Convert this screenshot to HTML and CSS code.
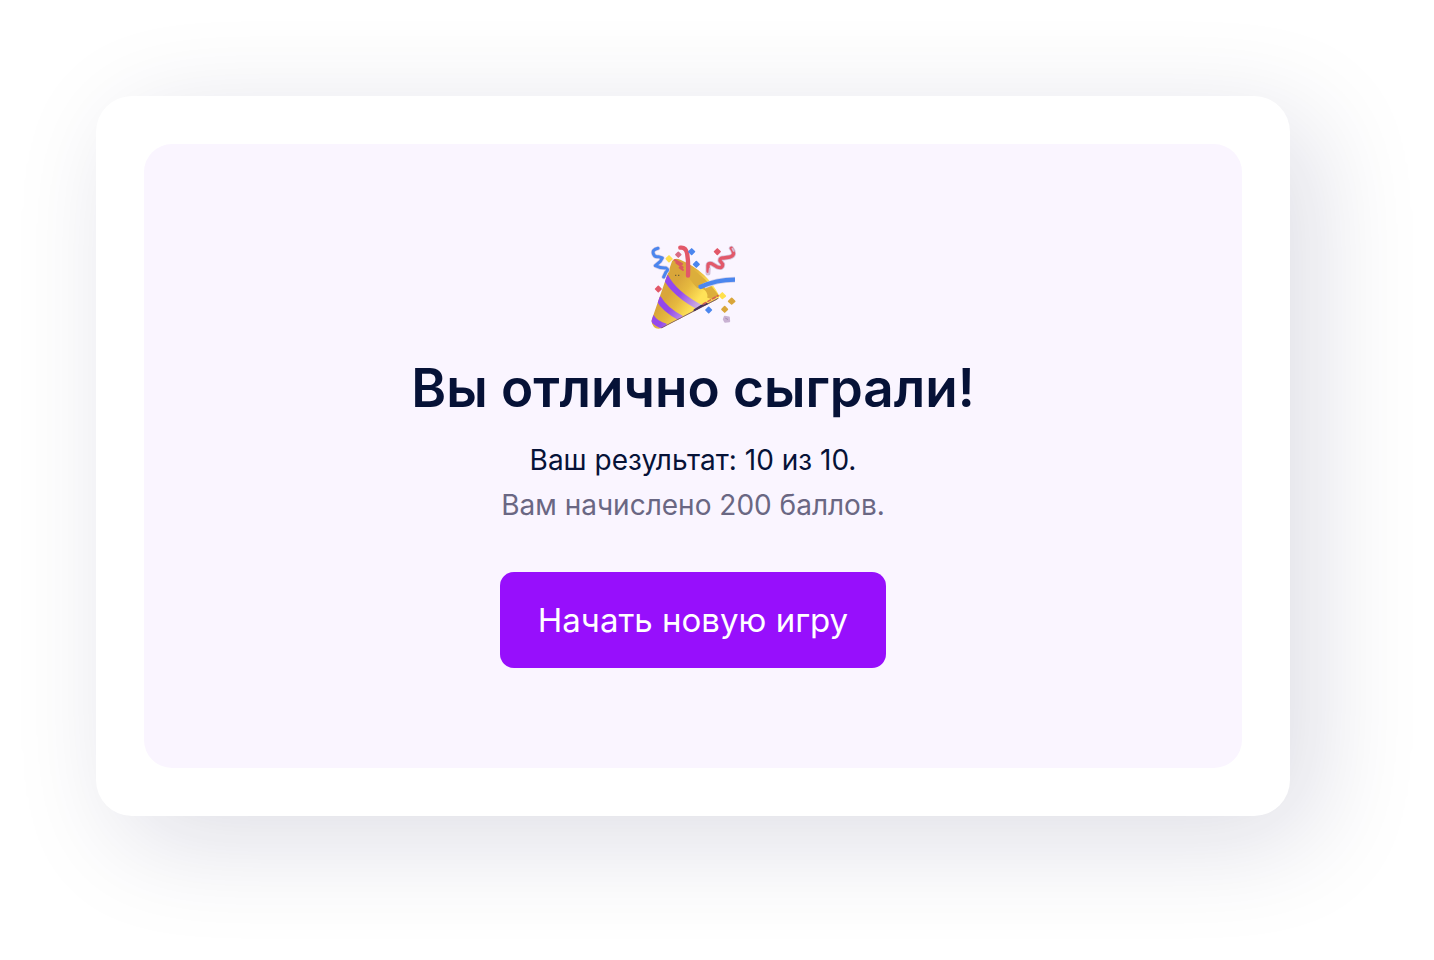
FILE: index.html
```html
<!DOCTYPE html>
<html lang="ru">
  <head>
    <meta charset="UTF-8" />
    <meta name="viewport" content="width=device-width, initial-scale=1.0" />
    <title>Результат игры</title>
    <link rel="stylesheet" href="styles.css">
  </head>
  <body>
    <main class="card">
      <section class="result">
        <svg class="result-icon" viewBox="30 29 258 258" fill="none" stroke-linecap="round" stroke-linejoin="round" aria-hidden="true">
          <defs>
            <linearGradient id="gold" gradientUnits="userSpaceOnUse" x1="75" y1="155" x2="160" y2="215">
              <stop offset="0.2" stop-color="#d9a63a" />
              <stop offset="0.55" stop-color="#e6b93f" />
              <stop offset="1" stop-color="#ffe258" />
            </linearGradient>
            <linearGradient id="stripe" gradientUnits="userSpaceOnUse" x1="60" y1="140" x2="175" y2="215">
              <stop offset="0.5" stop-color="#9448ec" />
              <stop offset="1" stop-color="#cfb3df" />
            </linearGradient>
            <clipPath id="cone">
              <path d="M96 78 Q102 65 121 73 Q202 108 237 180 Q240 188 230 193 L66 278 Q40 287 34 257 Z" />
            </clipPath>
          </defs>

          <!-- cone -->
          <g clip-path="url(#cone)">
            <path fill="url(#gold)" d="M30 60H245V285H30z" />
            <path fill="#dcae3b" d="M148 95 Q198 127 238 182 L218 192 L202 187 Q205 168 187 160 L171 158 Q147 132 142 116z" />
            <g stroke="url(#stripe)" stroke-width="18" stroke-linecap="butt">
              <path d="M76 123 Q102 176 187 220" />
              <path d="M54 187 Q75 224 124 249" />
              <path d="M33 244 Q47 267 78 274" />
            </g>
            <path stroke="#795568" stroke-width="6" d="M66 279 L152 234 L235 191" />
            <path stroke="#45315f" stroke-width="7" d="M164 225 L184 212 L200 206" />
            <path stroke="#d56253" stroke-width="5" stroke-dasharray="9 7" d="M190 206 L234 181" />
            <path stroke="#dc5960" stroke-width="6" d="M104 74 L126 86 M109 82 L128 96 M119 97 L129 104" />
            <path fill="#756334" d="M105 118h4v4h-4zm9 0h4v4h-4z" />
          </g>

          <!-- streamers -->
          <path stroke="#ddd0e5" stroke-width="13" d="M54 39 Q36 43 40 55 Q43 66 55 64 L67 68 L61 78 L46 91 Q63 99 78 98 Q88 103 78 110 L71 125" />
          <path stroke="#4b86ee" stroke-width="9" d="M54 39 Q36 43 40 55 Q43 66 55 64 L67 68 L61 78 L46 91 Q63 99 78 98 Q88 103 78 110 L71 125" />
          <path stroke="#e25869" stroke-width="13" d="M121 37 Q137 35 141 53 Q146 77 144 121" />
          <path stroke="#d5c4db" stroke-width="15" d="M204 113 L204 92 Q203 82 215 85 L230 94 Q248 102 248 87 L240 76 Q239 67 251 68 L270 65 Q289 59 274 39" />
          <path stroke="#e25869" stroke-width="10" d="M204 108 L204 92 Q203 82 215 85 L230 94 Q248 102 248 87 L240 76 Q239 67 251 68 L270 65 Q289 59 274 39" />
          <path stroke="#d5bdd6" stroke-width="5" d="M207 116 L209 100 M277 40 L281 47" />
          <path stroke="#d4d1ea" stroke-width="17" stroke-linecap="butt" d="M192 152 Q229 133 285 133" />
          <path stroke="#4b86ee" stroke-width="13" stroke-linecap="butt" d="M178 156 Q229 133 285 133" />
          <path stroke="#4b86ee" stroke-width="10" d="M180 155 L188 154" />

          <!-- confetti -->
          <g stroke-width="5">
            <path fill="#4b86ee" stroke="#4b86ee" d="M155 41l8 8-8 8-8-8zM169 79l8 8-8 8-8-8zM206 216l8 8-8 8-8-8z" />
            <path fill="#e25869" stroke="#e25869" d="M232 41l8 8-8 8-8-8zM55 153l8 8-8 8-8-8z" />
            <path fill="#d96b84" stroke="#d96b84" d="M115 51l7 7-7 7-7-7z" />
            <path fill="#ffe04d" stroke="#ffe04d" d="M87 62l9 9-9 8-8-9zM247 173l9 9-9 7-8-8z" />
            <path fill="#d9a63a" stroke="#d9a63a" d="M275 189l9 9-9 8-9-8zM254 214l8 8-8 8-8-8z" />
            <path fill="#c9b2d3" stroke="#c9b2d3" d="M254 244l13 2 1 12-13 2-4-8z" />
          </g>
          <path stroke="#a58bb1" stroke-width="3" d="M257 249l6 3" />
        </svg>

        <h1 class="result-title">Вы отлично сыграли!</h1>
        <p class="result-text">Ваш результат: 10 из 10.</p>
        <p class="result-text muted">Вам начислено 200 баллов.</p>
        <button class="btn" type="button">Начать новую игру</button>
      </section>
    </main>
  </body>
</html>
```
FILE: styles.css
```css
*,
*::after,
*::before {
  margin: 0;
  padding: 0;
  box-sizing: border-box;
}

:root {
  --dark: #061237;
  --muted: #6a6783;
  --accent: #970ffc;
  --panel: #faf5ff;
}

body {
  min-height: 100vh;
  padding: 96px 144px 144px 96px;
  display: flex;
  background-color: white;
  color: var(--dark);
  font-family: Inter, "Noto Sans", sans-serif;
}

.card {
  flex: 1;
  display: flex;
  padding: 48px;
  border-radius: 36px;
  background-color: white;
  box-shadow: 24px 24px 108px rgba(16, 16, 72, 0.14);
}

.result {
  flex: 1;
  display: flex;
  flex-direction: column;
  align-items: center;
  justify-content: center;
  padding: 48px;
  border-radius: 28px;
  background-color: var(--panel);
  text-align: center;
}

.result-icon {
  width: 86px;
  height: 86px;
  margin-bottom: 25px;
}

.result-title {
  margin-bottom: 18px;
  font-size: 53px;
  font-weight: 600;
  line-height: 64px;
}

.result-text {
  font-size: 28px;
  line-height: 45px;
}

.muted {
  color: var(--muted);
}

.btn {
  margin-top: 44px;
  padding: 24px 38px;
  border: none;
  border-radius: 14px;
  background-color: var(--accent);
  color: white;
  font-family: inherit;
  font-size: 33px;
  line-height: 48px;
  cursor: pointer;
}
```
